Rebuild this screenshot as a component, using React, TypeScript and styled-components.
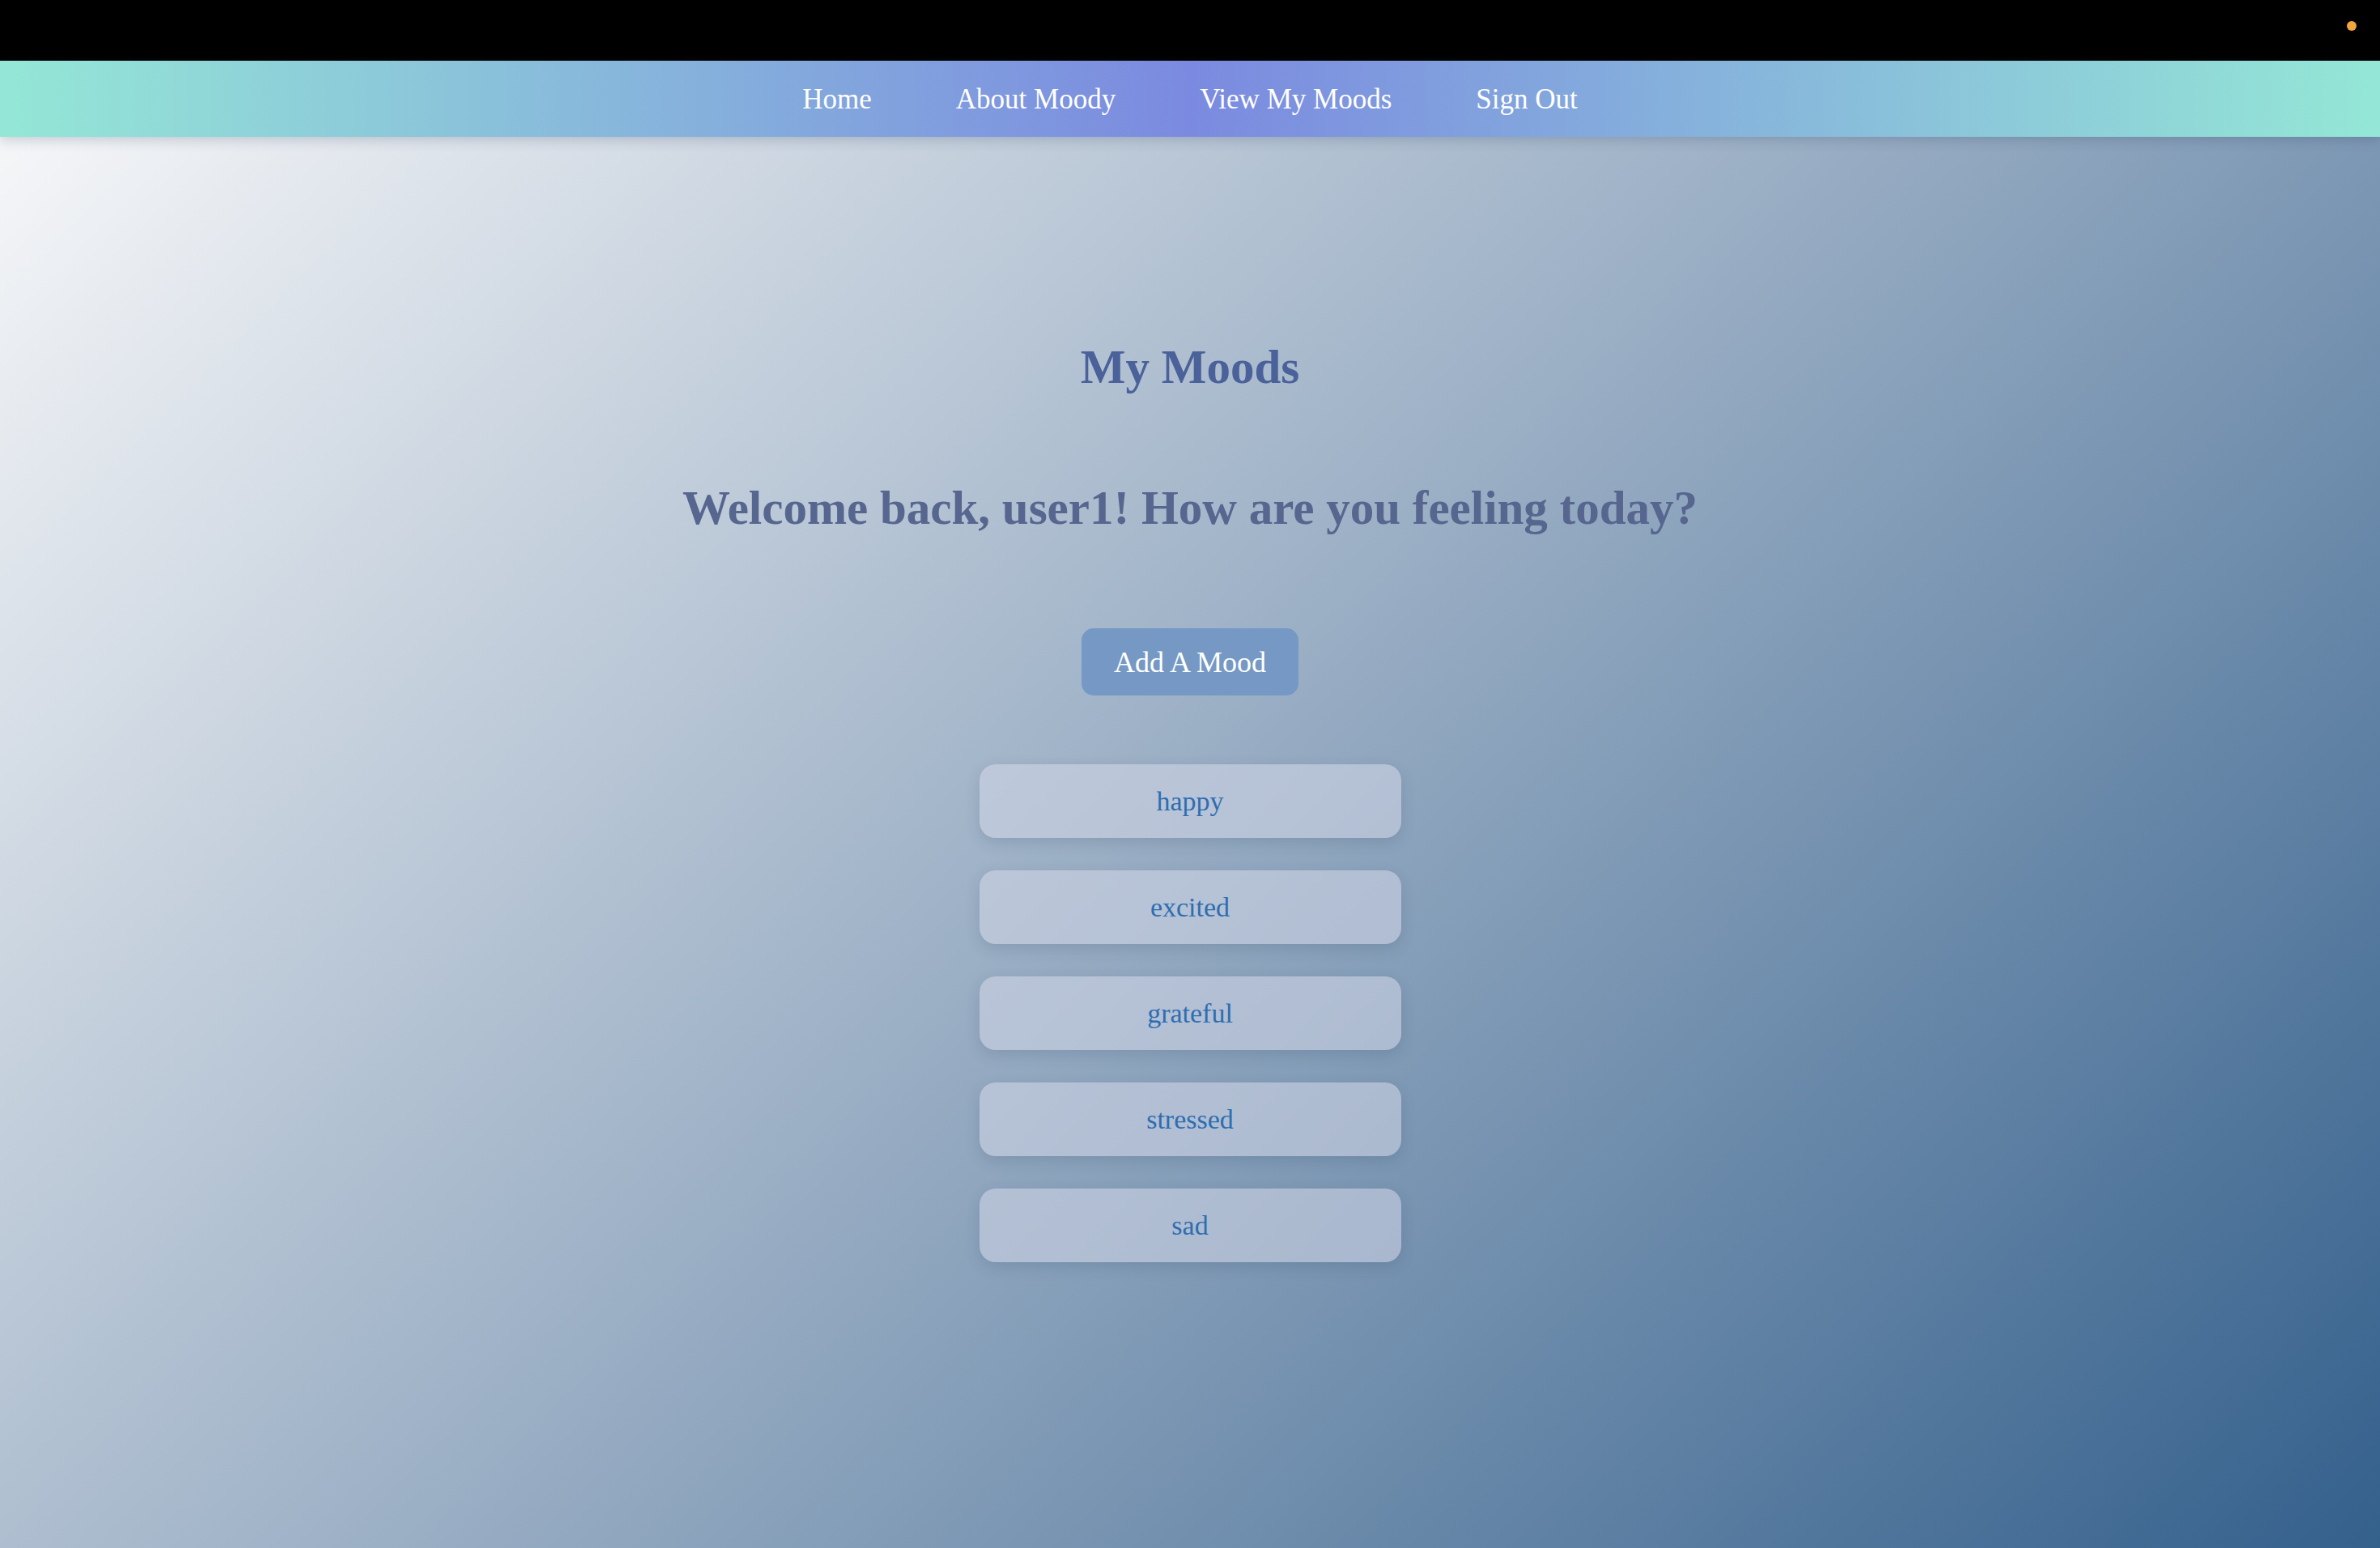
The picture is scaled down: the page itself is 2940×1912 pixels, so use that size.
import React from "react";
import styled, { createGlobalStyle } from "styled-components";

const GlobalStyle = createGlobalStyle`
  html, body {
    margin: 0;
    padding: 0;
    background: #000;
  }
  body {
    font-family: "Liberation Serif", "Times New Roman", serif;
  }
  * { box-sizing: border-box; }
`;

const Page = styled.div`
  display: flex;
  flex-direction: column;
  min-height: 1912px;
  width: 100%;
`;

const TopBar = styled.div`
  position: relative;
  height: 75px;
  flex: none;
  background: #000;
`;

const StatusDot = styled.span`
  position: absolute;
  top: 26px;
  right: 29px;
  width: 12px;
  height: 12px;
  border-radius: 50%;
  background: #f5a53e;
`;

const NavBar = styled.nav`
  position: relative;
  z-index: 2;
  height: 94px;
  flex: none;
  display: flex;
  align-items: center;
  justify-content: center;
  gap: 104px;
  background: linear-gradient(90deg, #94e7d6 0%, #7b8ae0 50%, #94e7d6 100%);
  box-shadow: 0 4px 14px rgba(40, 60, 90, 0.22);
`;

const NavLink = styled.a`
  color: #ffffff;
  font-size: 35px;
  line-height: 1;
  text-decoration: none;
  cursor: pointer;
`;

const Main = styled.main`
  flex: 1;
  display: flex;
  flex-direction: column;
  align-items: center;
  padding-top: 248px;
  padding-bottom: 80px;
  background: linear-gradient(135deg, #f5f6f8 0%, #96abc2 50%, #34608c 100%);
`;

const Title = styled.h1`
  margin: 0;
  font-size: 59px;
  line-height: 72px;
  font-weight: 700;
  color: #4a619a;
  text-align: center;
`;

const Welcome = styled.h2`
  margin: 102px 0 0;
  font-size: 59px;
  line-height: 72px;
  font-weight: 700;
  color: #56668f;
  text-align: center;
`;

const AddButton = styled.button`
  margin-top: 113px;
  width: 268px;
  height: 83px;
  border: none;
  border-radius: 15px;
  background: #7698c5;
  color: #ffffff;
  font-family: inherit;
  font-size: 36px;
  cursor: pointer;
`;

const MoodList = styled.ul`
  list-style: none;
  margin: 85px 0 0;
  padding: 0;
  display: flex;
  flex-direction: column;
  gap: 40px;
`;

const MoodCard = styled.li`
  width: 521px;
  height: 91px;
  display: flex;
  align-items: center;
  justify-content: center;
  border-radius: 20px;
  background: rgba(212, 215, 232, 0.55);
  box-shadow: 0 6px 18px rgba(40, 60, 90, 0.16);
  color: #2e6eb0;
  font-size: 34px;
`;

const moods = ["happy", "excited", "grateful", "stressed", "sad"];

export default function App() {
  return (
    <>
      <GlobalStyle />
      <Page>
        <TopBar>
          <StatusDot />
        </TopBar>
        <NavBar>
          <NavLink>Home</NavLink>
          <NavLink>About Moody</NavLink>
          <NavLink>View My Moods</NavLink>
          <NavLink>Sign Out</NavLink>
        </NavBar>
        <Main>
          <Title>My Moods</Title>
          <Welcome>Welcome back, user1! How are you feeling today?</Welcome>
          <AddButton>Add A Mood</AddButton>
          <MoodList>
            {moods.map((m) => (
              <MoodCard key={m}>{m}</MoodCard>
            ))}
          </MoodList>
        </Main>
      </Page>
    </>
  );
}
